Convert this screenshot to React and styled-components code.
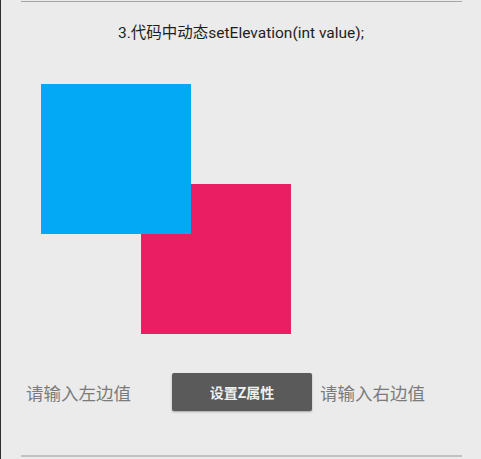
import React from 'react'
import styled, { createGlobalStyle } from 'styled-components'

const GlobalStyle = createGlobalStyle`
  html, body {
    margin: 0;
    padding: 0;
    background: #ebebeb;
  }
  body {
    font-family: Roboto, "Noto Sans CJK SC", sans-serif;
  }
`

const Page = styled.div`
  width: 481px;
  height: 459px;
  box-sizing: border-box;
  border-left: 1px solid #2e2e2e;
  background: #ebebeb;
  display: flex;
  flex-direction: column;
  overflow: hidden;
`

const Rule = styled.div`
  height: ${p => p.thick}px;
  margin: ${p => p.top}px 19px 0 20px;
  background: ${p => p.color};
`

const Title = styled.p`
  margin: 20px 0 0;
  text-align: center;
  font-size: 15.5px;
  line-height: 22px;
  color: #1e1e1e;
`

const Stage = styled.div`
  display: grid;
  margin: 40px 0 0 40px;
`

const Square = styled.div`
  grid-area: 1 / 1;
  width: 150px;
  height: 150px;
  background: ${p => p.color};
  margin: ${p => p.offset}px 0 0 ${p => p.offset}px;
  z-index: ${p => p.layer};
`

const Controls = styled.div`
  display: flex;
  align-items: center;
  margin: 39px 0 0 25px;
`

const Hint = styled.span`
  font-size: 17.5px;
  color: #7b7b7b;
  width: ${p => p.w}px;
`

const Button = styled.button`
  width: 140px;
  height: 38px;
  margin-right: 8px;
  border: none;
  border-radius: 2px;
  background: #5a5a5a;
  color: #f0f0f0;
  font-family: Roboto, "Noto Sans CJK SC", sans-serif;
  font-size: 14px;
  font-weight: bold;
  box-shadow: 0 1px 2px rgba(0, 0, 0, 0.3);
  padding: 0;
`

const Spacer = styled.div`
  flex: 1;
`

export default function App() {
  return (
    <>
      <GlobalStyle />
      <Page>
        <Rule top={1} thick={1} color="#a6a6a6" />
        <Title>3.代码中动态setElevation(int value);</Title>
        <Stage>
          <Square color="#03a9f4" offset={0} layer={2} />
          <Square color="#e91e63" offset={100} layer={1} />
        </Stage>
        <Controls>
          <Hint w={146}>请输入左边值</Hint>
          <Button>设置Z属性</Button>
          <Hint>请输入右边值</Hint>
        </Controls>
        <Spacer />
        <Rule top={0} thick={2} color="#c2c2c2" />
        <Rule top={2} thick={0} color="transparent" />
      </Page>
    </>
  )
}
